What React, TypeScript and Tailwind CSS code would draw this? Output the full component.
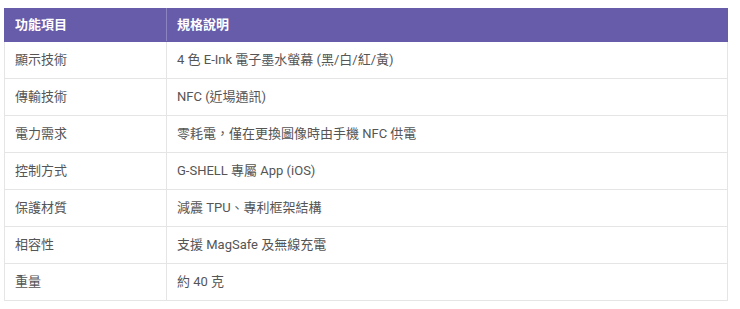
import React from "react";

const rows = [
  ["顯示技術", "4 色 E-Ink 電子墨水螢幕 (黑/白/紅/黃)"],
  ["傳輸技術", "NFC (近場通訊)"],
  ["電力需求", "零耗電，僅在更換圖像時由手機 NFC 供電"],
  ["控制方式", "G-SHELL 專屬 App (iOS)"],
  ["保護材質", "減震 TPU、專利框架結構"],
  ["相容性", "支援 MagSafe 及無線充電"],
  ["重量", "約 40 克"],
];

const App = () => {
  return (
    <div
      className="bg-white w-[740px] h-[309px] pt-[8px] pl-[4px]"
      style={{ fontFamily: 'Roboto, "Noto Sans CJK TC", sans-serif' }}
    >
      <table className="w-[724px] border-collapse text-[13px] table-fixed">
        <colgroup>
          <col className="w-[162px]" />
          <col />
        </colgroup>
        <thead>
          <tr className="bg-[#675ca9] text-white h-[33px]">
            <th className="text-left font-bold px-[10px] border border-[#675ca9] border-r-[#8c83c0]">功能項目</th>
            <th className="text-left font-bold px-[10px] border border-[#675ca9]">規格說明</th>
          </tr>
        </thead>
        <tbody>
          {rows.map(([k, v]) => (
            <tr key={k} className="h-[37px]">
              <td className="px-[10px] text-[#555] border border-[#e5e5e5]">{k}</td>
              <td className="px-[10px] text-[#555] border border-[#e5e5e5]">{v}</td>
            </tr>
          ))}
        </tbody>
      </table>
    </div>
  );
};

export default App;
